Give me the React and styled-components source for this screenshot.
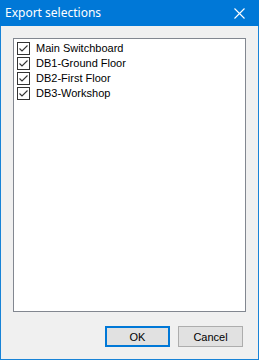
import React from "react";
import styled, { createGlobalStyle } from "styled-components";

const GlobalStyle = createGlobalStyle`
  html, body {
    margin: 0;
    padding: 0;
    background: #ffffff;
  }
`;

const items = [
  "Main Switchboard",
  "DB1-Ground Floor",
  "DB2-First Floor",
  "DB3-Workshop",
];

const CheckMark = () => (
  <svg width="11" height="11" viewBox="0 0 11 11">
    <path d="M1.5 5.5 L4 8 L9.5 2.5" fill="none" stroke="#333" strokeWidth="1.1" />
  </svg>
);

const CloseIcon = () => (
  <svg width="11" height="11" viewBox="0 0 11 11">
    <path d="M0.5 0.5 L10.5 10.5 M10.5 0.5 L0.5 10.5" stroke="#fff" strokeWidth="1.1" />
  </svg>
);

const App = () => {
  return (
    <>
      <GlobalStyle />
      <Window>
        <TitleBar>
          <span className="title">Export selections</span>
          <CloseButton>
            <CloseIcon />
          </CloseButton>
        </TitleBar>
        <Body>
          <ListBox>
            {items.map((item) => (
              <Row key={item}>
                <Box>
                  <CheckMark />
                </Box>
                <span>{item}</span>
              </Row>
            ))}
          </ListBox>
          <Footer>
            <Button $primary>OK</Button>
            <Button>Cancel</Button>
          </Footer>
        </Body>
      </Window>
    </>
  );
};

const Window = styled.div`
  width: 259px;
  height: 360px;
  box-sizing: border-box;
  border: 1px solid #1883d7;
  border-top: none;
  background: #f0f0f0;
  display: flex;
  flex-direction: column;
  font-family: "Liberation Sans", Arial, sans-serif;
  font-size: 11px;
  color: #000;
`;

const TitleBar = styled.div`
  height: 26px;
  margin: 0 -1px;
  background: #0078d7;
  color: #fff;
  display: flex;
  align-items: center;
  justify-content: space-between;
  padding: 0 0 0 5px;
  .title {
    font-family: "Noto Sans", "Open Sans", sans-serif;
    font-size: 12px;
    margin-top: -2px;
  }
`;

const CloseButton = styled.div`
  width: 24px;
  height: 26px;
  margin-right: 8px;
  display: flex;
  align-items: center;
  justify-content: center;
`;

const Body = styled.div`
  flex: 1;
  padding: 12px 12px 0 12px;
  display: flex;
  flex-direction: column;
`;

const ListBox = styled.div`
  height: 274px;
  box-sizing: border-box;
  border: 1px solid #828790;
  background: #fff;
  padding: 2px 0 0 2px;
  display: flex;
  flex-direction: column;
`;

const Row = styled.div`
  height: 15px;
  display: flex;
  align-items: center;
  gap: 6px;
  padding-left: 1px;
  span {
    line-height: 15px;
  }
`;

const Box = styled.div`
  width: 13px;
  height: 13px;
  box-sizing: border-box;
  border: 1px solid #333;
  background: #fff;
  display: flex;
  align-items: center;
  justify-content: center;
`;

const Footer = styled.div`
  margin-top: 14px;
  padding-right: 3px;
  display: flex;
  justify-content: flex-end;
  gap: 8px;
`;

const Button = styled.div`
  width: 65px;
  height: 21px;
  box-sizing: border-box;
  background: #e1e1e1;
  border: ${(p) => (p.$primary ? "2px solid #0078d7" : "1px solid #adadad")};
  display: flex;
  align-items: center;
  justify-content: center;
  font-size: 11px;
`;

export default App;
